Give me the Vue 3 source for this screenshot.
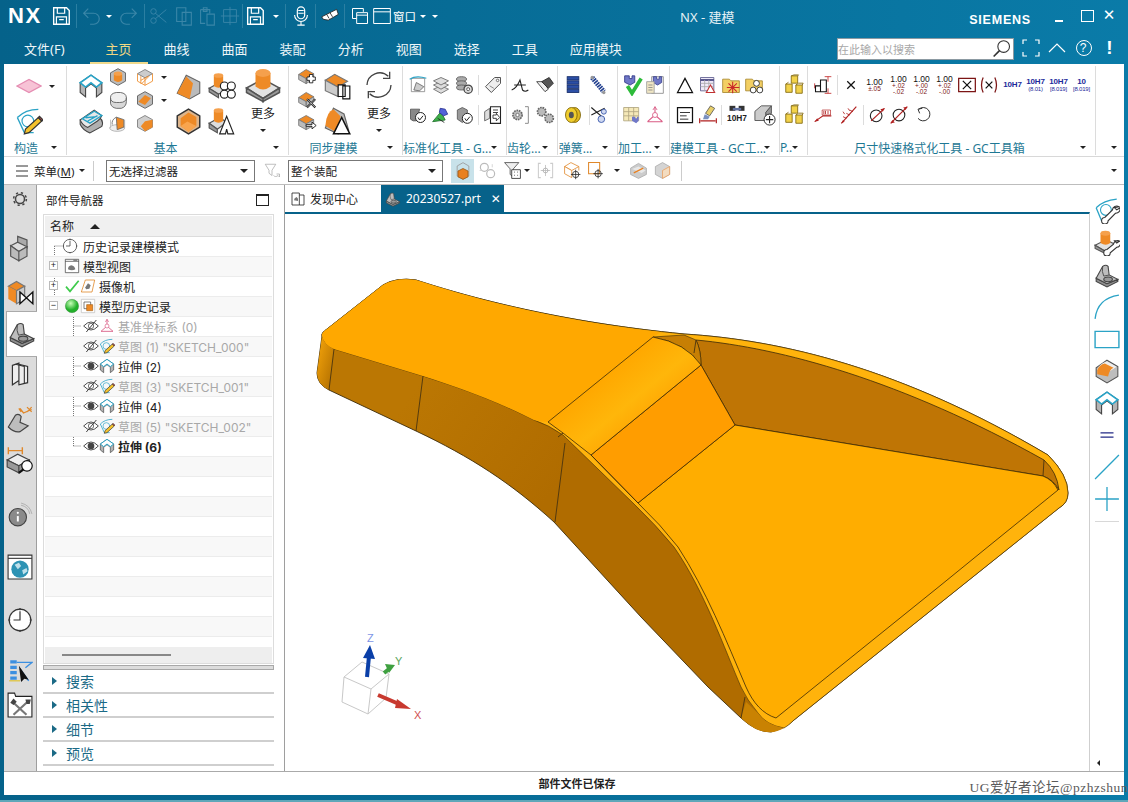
<template>
  <div class="app">
    <!-- shared icon sheet -->
    <svg class="sheet" aria-hidden="true">
      <defs>
        <symbol id="diamond" viewBox="0 0 24 24"><path d="M1 12 12 6l11 6-11 6z" fill="#f7c3d6" stroke="#e58db2" stroke-width="1.2"/></symbol>
        <symbol id="sketch" viewBox="0 0 24 24"><path d="M2 9Q9 2 20 2M2 9l6 13h8" fill="none" stroke="#2ba3c6" stroke-width="1.2"/><circle cx="11" cy="12" r="5" fill="none" stroke="#2ba3c6"/><path d="M20 9l3 3-11 10-4 1 1-4z" fill="#f4c22c" stroke="#333"/><path d="M20 9l3 3 1-1-3-3z" fill="#d8504a" stroke="#333"/></symbol>
        <symbol id="sketchw" viewBox="0 0 24 24"><path d="M2 9Q9 2 21 1M2 9l5 12h6" fill="none" stroke="#2ba3c6" stroke-width="1.2"/><circle cx="11" cy="11" r="5" fill="none" stroke="#2ba3c6"/><path d="M23 8a4 4 0 0 0-6 3l-7 7a3 3 0 1 0 3 3l7-7a4 4 0 0 0 4-5l-3 2-2-2z" fill="#fff" stroke="#333"/></symbol>
        <symbol id="extrude" viewBox="0 0 24 24"><path d="M2 9l10-7 10 7v9l-5 4v-8l-5-4-5 4v8l-5-4z" fill="#b4b4b4" stroke="#444"/><path d="M2 9l10-7 10 7-5 4-5-4-5 4z" fill="#fff" stroke="#27a3c7" stroke-width="1.5"/></symbol>
        <symbol id="revolve" viewBox="0 0 24 24"><path d="M2 11v4q2 5 9 8l11-6q2-5-2-8z" fill="#b0b0b0" stroke="#444"/><path d="M2 11L15 2l7 5q-1 3-4 5l-9 6q-5-2-7-7z" fill="#e8e8e8" stroke="#444"/><path d="M4 10L15 3l7 4-11 7zM7 9l10-1M9 12l9-5" fill="none" stroke="#27a3c7" stroke-width="1.200"/></symbol>
        <symbol id="hole" viewBox="0 0 24 24"><path d="M12 2l9 5v10l-9 5-9-5V7z" fill="#bbb" stroke="#555"/><path d="M7 8v8q5 4 10 0V8z" fill="#ee8a26"/><ellipse cx="12" cy="8" rx="5" ry="2.5" fill="#f5a04c"/></symbol>
        <symbol id="wire" viewBox="0 0 24 24"><path d="M12 3l9 5-9 5-9-5z" fill="#ccc" stroke="#777"/><path d="M3 8v9l9 5 9-5V8M12 13v9M7 11v9M16 11l-9 5M8 20l9-9" fill="none" stroke="#ee8a26"/></symbol>
        <symbol id="pill" viewBox="0 0 24 24"><path d="M3 9v7q1 5 7 6h6q6-2 6-8V9z" fill="#d8d8d8" stroke="#555"/><path d="M3 9q0-5 7-6h5q7 1 7 6 0 6-8 6h-4Q3 15 3 9z" fill="#efefef" stroke="#555"/></symbol>
        <symbol id="cham" viewBox="0 0 24 24"><path d="M12 2l9 5v10l-9 5-9-5V7z" fill="#bbb" stroke="#555"/><path d="M4 14l8-8 7 4-7 8z" fill="#ee8a26"/></symbol>
        <symbol id="ball" viewBox="0 0 24 24"><ellipse cx="11" cy="18" rx="9" ry="4" fill="#eee" stroke="#aaa"/><path d="M3 8v10M20 8v10" stroke="#bbb"/><path d="M10 5l9 3v9l-8 3z" fill="#ee8a26" stroke="#666"/><path d="M10 5Q4 8 5 14" fill="none" stroke="#666"/></symbol>
        <symbol id="smallb" viewBox="0 0 24 24"><path d="M12 3l9 5v9l-9 5-9-5V8z" fill="#cfcfcf" stroke="#777"/><path d="M12 10l9-2v9l-9 5-5-6z" fill="#ee8a26"/></symbol>
        <symbol id="bigb" viewBox="0 0 24 24"><path d="M10 2l12 6v10l-9 5-11-5z" fill="#bbb" stroke="#666"/><path d="M10 3L2 18l11 5 3-14z" fill="#ee8a26"/></symbol>
        <symbol id="blend" viewBox="0 0 24 24"><path d="M12 2l10 6v9l-10 6-10-6V9z" fill="#bdbdbd" stroke="#555"/><path d="M12 3l9 5-6 4-12-1q1-5 9-8z" fill="#eee"/><path d="M3 11q2-5 7-6l8 4q-4 2-5 8l-10-2z" fill="#ee8a26"/></symbol>
        <symbol id="pattern" viewBox="0 0 24 24"><path d="M1 14l9-5 8 5-9 5z" fill="#ddd" stroke="#555"/><path d="M1 14v3l8 5v-3z" fill="#999" stroke="#555"/><path d="M5 3v9q4 3 8 0V3z" fill="#ee8a26"/><ellipse cx="9" cy="3" rx="4" ry="2" fill="#f5a04c"/><g fill="#fff" stroke="#222"><circle cx="14" cy="12" r="3.4"/><circle cx="20" cy="12" r="3.4"/><circle cx="14" cy="19" r="3.4"/><circle cx="20" cy="19" r="3.4"/></g></symbol>
        <symbol id="hexs" viewBox="0 0 24 24"><path d="M12 1l10 6v10l-10 6-10-6V7z" fill="#ddb58c" stroke="#333" stroke-width="1.3"/><path d="M12 4l7 4v8l-7 5-7-5V9z" fill="#ee8a26"/><path d="M5 16l6-4 8 4-7 5z" fill="#f9a54e"/></symbol>
        <symbol id="mirror" viewBox="0 0 24 24"><path d="M1 14l9-5 6 4-8 6z" fill="#ddd" stroke="#555"/><path d="M1 14v4l7 4v-3z" fill="#999" stroke="#555"/><path d="M5 3v9q4 3 8 0V3z" fill="#ee8a26"/><ellipse cx="9" cy="3" rx="4" ry="2" fill="#f5a04c"/><path d="M16 8l-6 15h5l1-4 1 4h5z" fill="#fff" stroke="#222"/></symbol>
        <symbol id="boss" viewBox="0 0 24 24"><path d="M1 14l11-6 11 6-11 7z" fill="#e2e2e2" stroke="#555"/><path d="M1 14v3l11 6v-2zM23 14v3l-11 6v-2z" fill="#999" stroke="#555"/><path d="M7 4v9q5 4 10 0V4z" fill="#ee8a26"/><ellipse cx="12" cy="4" rx="5" ry="2.6" fill="#f5a04c"/></symbol>
        <symbol id="sycross" viewBox="0 0 24 24"><path d="M2 9l9-6 9 5-9 6z" fill="#ee8a26" stroke="#777"/><path d="M2 9v6l9 5v-6zM20 8v6l-9 6v-6z" fill="#bbb" stroke="#777"/><path d="M15 9h4v3h3v4h-3v3h-4v-3h-3v-4h3z" fill="#fff" stroke="#111"/></symbol>
        <symbol id="syx" viewBox="0 0 24 24"><path d="M2 9l9-6 9 5-9 6z" fill="#ee8a26" stroke="#777"/><path d="M2 9v6l9 5v-6zM20 8v6l-9 6v-6z" fill="#bbb" stroke="#777"/><path d="M12 11l10 10M22 11L12 21" stroke="#111" stroke-width="2.4"/><path d="M12 11l10 10M22 11L12 21" stroke="#fff" stroke-width=".8"/></symbol>
        <symbol id="syarr" viewBox="0 0 24 24"><path d="M2 8l9-5 9 5-9 5z" fill="#ee8a26" stroke="#777"/><path d="M2 8v7l9 5v-7zM20 8v7l-9 5v-7z" fill="#bbb" stroke="#777"/><path d="M11 14h7v-3l5 4-5 4v-3h-7zM11 16" fill="#fff" stroke="#111"/></symbol>
        <symbol id="sheets" viewBox="0 0 24 24"><path d="M2 7l8-5 11 6-8 5z" fill="#ee8a26" stroke="#777"/><path d="M2 7v9l11 5v-8z" fill="#ccc" stroke="#777"/><path d="M13 11h6v10h-6zM17 12h6v11h-6z" fill="#fff" stroke="#111"/></symbol>
        <symbol id="wedge" viewBox="0 0 24 24"><path d="M9 1l9 5 4 14-9 3L2 18z" fill="#bbb" stroke="#666"/><path d="M9 2Q3 4 2 16l10 6 3-14z" fill="#ee8a26"/><path d="M16 9L9 23h14z" fill="#fff" stroke="#111" stroke-width="1.3"/></symbol>
        <symbol id="refresh" viewBox="0 0 24 24"><path d="M3 12A9.5 9.5 0 0 1 19 5.500M21 12A9.500 9.500 0 0 1 5 18.500" fill="none" stroke="#444"/><path d="M15 7h5V2M9 17H4v5" fill="none" stroke="#444"/></symbol>
        <symbol id="frame" viewBox="0 0 24 24"><path d="M4 4h16v16H4z" fill="#fff" stroke="#888"/><path d="M7 18l3-9 9 5-5 5z" fill="#ccc" stroke="#666"/><path d="M2 5Q10 0 22 4" fill="none" stroke="#2ba3c6" stroke-width="1.3"/></symbol>
        <symbol id="layers" viewBox="0 0 24 24"><g fill="#ddd" stroke="#666"><path d="M12 13l9 4-9 5-9-5z"/><path d="M12 8l9 4-9 5-9-5z"/><path d="M12 3l9 4-9 5-9-5z"/></g></symbol>
        <symbol id="gearstk" viewBox="0 0 24 24"><g fill="#aaa" stroke="#555"><ellipse cx="9" cy="5" rx="6" ry="3"/><ellipse cx="9" cy="10" rx="6" ry="3"/><ellipse cx="9" cy="15" rx="6" ry="3"/></g><circle cx="17" cy="17" r="5" fill="#ddd" stroke="#444" stroke-width="1.5"/><circle cx="17" cy="17" r="1.800" fill="#fff" stroke="#444"/></symbol>
        <symbol id="tag" viewBox="0 0 24 24"><path d="M14 3h7v7L10 21l-7-7z" fill="#eee" stroke="#555" stroke-width="1.2"/><circle cx="17.500" cy="6.500" r="1.500" fill="#fff" stroke="#555"/><path d="M8 13l5 3" stroke="#777"/></symbol>
        <symbol id="cylchk" viewBox="0 0 24 24"><path d="M3 5v12q3 3 7 2l4-14z" fill="#888" stroke="#555"/><circle cx="15" cy="15" r="6" fill="#fff" stroke="#222" stroke-width="1.2"/><path d="M12 15l2 3 4-5" fill="none" stroke="#222" stroke-width="1.2"/></symbol>
        <symbol id="greenb" viewBox="0 0 24 24"><path d="M2 20L12 8l5 10z" fill="#3fb24a" stroke="#1e6d2a"/><path d="M11 4l6 1 3 6-5 2-5-4z" fill="#5263d8" stroke="#2a3190"/><path d="M8 16l8 5" stroke="#222"/></symbol>
        <symbol id="boxchk" viewBox="0 0 24 24"><path d="M4 6l6-3 6 3v11l-6 4-6-4z" fill="#999" stroke="#555"/><circle cx="16" cy="16" r="6" fill="#fff" stroke="#222" stroke-width="1.2"/><path d="M13 16l2 3 4-5" fill="none" stroke="#222" stroke-width="1.2"/></symbol>
        <symbol id="docarr" viewBox="0 0 24 24"><path d="M2 8l6-4v12l-6 3z" fill="#ddd" stroke="#555"/><path d="M9 2h12v20H9z" fill="#fff" stroke="#222" stroke-width="1.3"/><path d="M12 6h6M12 9h6" stroke="#222"/><path d="M12 12h4v-2l4 5-4 4v-3h-4z" fill="#fff" stroke="#222"/></symbol>
        <symbol id="aline" viewBox="0 0 24 24"><path d="M2 18Q8 16 12 6l3 12q3 3 7 0M5 12h14" fill="none" stroke="#222" stroke-width="1.3"/></symbol>
        <symbol id="penb" viewBox="0 0 24 24"><path d="M2 8l10 12 4-3-6-9z" fill="#eee" stroke="#333"/><path d="M8 8l9-5 5 7-6 6z" fill="#555" stroke="#222"/></symbol>
        <symbol id="gearb" viewBox="0 0 24 24"><circle cx="9" cy="12" r="5.500" fill="#bbb" stroke="#666" stroke-width="2" stroke-dasharray="2 1"/><circle cx="9" cy="12" r="2" fill="#fff" stroke="#666"/><path d="M18 2h4v20h-4" fill="none" stroke="#777"/></symbol>
        <symbol id="gears" viewBox="0 0 24 24"><circle cx="8" cy="8" r="5" fill="#bbb" stroke="#666" stroke-width="2" stroke-dasharray="2 1"/><circle cx="17" cy="16" r="5" fill="#bbb" stroke="#666" stroke-width="2" stroke-dasharray="2 1"/></symbol>
        <symbol id="stackb" viewBox="0 0 24 24"><g fill="#2c4fa6" stroke="#132a66"><rect x="5" y="2" width="14" height="4"/><rect x="5" y="7" width="14" height="4"/><rect x="5" y="12" width="14" height="4"/><rect x="5" y="17" width="14" height="4"/></g></symbol>
        <symbol id="spring" viewBox="0 0 24 24"><path d="M5 3l14 17" stroke="#23408f" stroke-width="6" stroke-dasharray="2 1"/><circle cx="5" cy="3" r="2" fill="#999"/><circle cx="19" cy="21" r="2" fill="#999"/></symbol>
        <symbol id="coil" viewBox="0 0 24 24"><ellipse cx="14" cy="12" rx="7" ry="9" fill="#e0b820" stroke="#7a6000"/><ellipse cx="10" cy="12" rx="7" ry="9" fill="#f0cd2e" stroke="#7a6000"/><ellipse cx="10" cy="12" rx="3" ry="4" fill="#555"/></symbol>
        <symbol id="sciss" viewBox="0 0 24 24"><path d="M4 3l16 14M4 12L20 4" stroke="#222" stroke-width="1.4"/><circle cx="16" cy="17" r="4" fill="#cfd8f0" stroke="#3050a8"/><circle cx="19" cy="8" r="3" fill="#cfd8f0" stroke="#3050a8"/></symbol>
        <symbol id="vcheck" viewBox="0 0 24 24"><path d="M4 2h5v3h3V2h3v7l-5 3-6-3z" fill="#7078c8" stroke="#38408c"/><path d="M7 13l5 8L22 5" fill="none" stroke="#2dbb3a" stroke-width="4"/></symbol>
        <symbol id="vdoc" viewBox="0 0 24 24"><path d="M8 2h14v20H8z" fill="#fff" stroke="#888"/><path d="M10 2h4v3h3V2h3v7l-5 3-5-3z" fill="#7078c8" stroke="#38408c"/><path d="M2 8h9v14H2z" fill="#f0e6c4" stroke="#999"/><path d="M4 12h5M4 15h5M4 18h5" stroke="#888"/></symbol>
        <symbol id="table" viewBox="0 0 24 24"><path d="M2 3h18v16H2z" fill="#f5e9b8" stroke="#b0a580"/><path d="M2 8h18M2 13h18M8 3v16M14 3v16" stroke="#b0a580"/><path d="M12 14h4v2h2v-2h2v5l-3 3-5-3z" fill="#7078c8"/></symbol>
        <symbol id="triad" viewBox="0 0 24 24"><path d="M12 2v10L3 20M12 12l9 8M3 20h18" fill="none" stroke="#d95b84" stroke-width="1.300"/><circle cx="12" cy="12" r="3" fill="#fff" stroke="#d95b84"/><path d="M9.500 6L12 2l2.500 4" fill="none" stroke="#d95b84"/></symbol>
        <symbol id="tri" viewBox="0 0 24 24"><path d="M12 4L3 21h18z" fill="#fff" stroke="#111" stroke-width="1.500"/></symbol>
        <symbol id="rtable" viewBox="0 0 24 24"><path d="M3 3h16v16H3z" fill="#efe9f8" stroke="#5a5a8c"/><path d="M3 6h16" stroke="#3c3c78" stroke-width="2"/><path d="M3 10h16M3 14h16M8 6v13M13 6v13" stroke="#aaa"/><path d="M15 12l-5 9h10z" fill="#fff" stroke="#c03030" stroke-width="1.300"/></symbol>
        <symbol id="fstar" viewBox="0 0 24 24"><path d="M2 5h8l2 2h10v14H2z" fill="#f3cf63" stroke="#a6852c"/><path d="M14 8v14M7 15h15M9 10l10 10M19 10L9 20" stroke="#c82828" stroke-width="1.300"/></symbol>
        <symbol id="fring" viewBox="0 0 24 24"><path d="M2 5h8l2 2h10v12H2z" fill="#f3cf63" stroke="#a6852c"/><g fill="#fff" stroke="#222"><circle cx="15" cy="10" r="3.500"/><circle cx="11" cy="18" r="3.500"/><circle cx="19" cy="18" r="3.500"/></g></symbol>
        <symbol id="tbox" viewBox="0 0 24 24"><path d="M3 3h18v18H3z" fill="#fff" stroke="#111" stroke-width="1.500"/><path d="M6 9h12M6 13h8M6 17h10" stroke="#111"/></symbol>
        <symbol id="paint" viewBox="0 0 24 24"><path d="M15 1l5 3-6 9-5-3z" fill="#e8cf6a" stroke="#555"/><path d="M2 16v6M22 16v6M3 19h18" stroke="#b02020" stroke-width="1.400"/><path d="M8 11l6 3-2 3H6z" fill="#7a90c0"/></symbol>
        <symbol id="binoc" viewBox="0 0 24 24"><rect x="3" y="1" width="7" height="6" fill="#333"/><rect x="14" y="1" width="7" height="6" fill="#333"/><path d="M7 5h10" stroke="#6070a0" stroke-width="3"/><text x="12" y="19" text-anchor="middle" font-family="Liberation Sans" font-size="10" font-weight="700" fill="#222">10H7</text></symbol>
        <symbol id="boxplus" viewBox="0 0 24 24"><path d="M1 8l7-6h11l-6 7v9H1z" fill="#ccc" stroke="#555"/><path d="M13 9l6-7v8l-6 8z" fill="#999" stroke="#555"/><circle cx="17" cy="17" r="6" fill="#fff" stroke="#222"/><path d="M17 13v8M13 17h8" stroke="#222" stroke-width="1.200"/></symbol>
        <symbol id="gold" viewBox="0 0 24 24"><g fill="#f2d24a" stroke="#8a7118"><path d="M9 2h7v8H9z"/><path d="M3 11h7v9H3z"/><path d="M14 12h7v9h-7z"/></g><path d="M9 2l3-1h5l-1 1M3 11l3-2M14 12l3-2h5l-1 2" fill="none" stroke="#8a7118"/></symbol>
        <symbol id="dimh" viewBox="0 0 24 24"><path d="M14 2h8M14 22h8M18 2v6M18 16v6M2 10v6" stroke="#c02828"/><path d="M9 6h7v14H9zM3 13h6v7H3z" fill="#fff" stroke="#111" stroke-width="1.300"/></symbol>
        <symbol id="xmark" viewBox="0 0 24 24"><path d="M7 7l10 10M17 7L7 17" stroke="#111" stroke-width="1.700"/></symbol>
        <symbol id="xbox" viewBox="0 0 24 24"><path d="M2 4h20v16H2z" fill="#fff" stroke="#7c1515" stroke-width="1.500"/><path d="M7 7l10 10M17 7L7 17" stroke="#111" stroke-width="1.500"/></symbol>
        <symbol id="xparen" viewBox="0 0 24 24"><path d="M5 3Q1 12 5 21M19 3q4 9 0 18" fill="none" stroke="#7c1515" stroke-width="1.500"/><path d="M8 8l8 8M16 8l-8 8" stroke="#111" stroke-width="1.500"/></symbol>
        <symbol id="rdim" viewBox="0 0 24 24"><path d="M2 20L12 13h10" fill="none" stroke="#b02020" stroke-width="1.300"/><path d="M2 20l5-1-2-3z" fill="#b02020"/><path d="M11 6h10v6H11z" fill="#fff" stroke="#b02020" stroke-width=".8"/><path d="M13 7v4M15 7v4M18 7v4" stroke="#b02020"/></symbol>
        <symbol id="slant" viewBox="0 0 24 24"><path d="M4 22L22 2" stroke="#b02020" stroke-width="1.400"/><path d="M6 14l4 2M10 10l4 2M14 6l4 2M6 8l2 3M12 4l2 3" stroke="#b02020"/><path d="M4 22l4-2-2-2z" fill="#b02020"/></symbol>
        <symbol id="cdim" viewBox="0 0 24 24"><circle cx="11" cy="13" r="7" fill="#fff" stroke="#222" stroke-width="1.300"/><path d="M5 19L21 4" stroke="#b02020" stroke-width="1.500"/><path d="M21 4l-5 1 3 3z" fill="#b02020"/></symbol>
        <symbol id="cdim2" viewBox="0 0 24 24"><circle cx="12" cy="12" r="7" fill="#fff" stroke="#222" stroke-width="1.300"/><path d="M2 22L22 2" stroke="#b02020" stroke-width="1.500"/><path d="M2 22l5-1-3-3zM22 2l-5 1 3 3z" fill="#b02020"/></symbol>
        <symbol id="undo2" viewBox="0 0 24 24"><path d="M11 4l-5 1 2 5" fill="none" stroke="#333" stroke-width="1.200"/><path d="M7 5a8 8 0 1 1-1 11" fill="none" stroke="#333" stroke-width="1.200"/></symbol>
        <symbol id="floppy" viewBox="0 0 24 24"><path d="M4 3h14l3 3v15H4z" fill="none" stroke="currentColor" stroke-width="1.500"/><path d="M8 3v6h8V3M7 21v-8h11v8M10 16h5" fill="none" stroke="currentColor" stroke-width="1.300"/></symbol>
        <symbol id="undo" viewBox="0 0 24 24"><path d="M5 9h10a6 6 0 0 1 0 12h-4M9 4L4 9l5 5" fill="none" stroke="currentColor" stroke-width="1.300"/></symbol>
        <symbol id="redo" viewBox="0 0 24 24"><path d="M19 9H9a6 6 0 0 0 0 12h4M15 4l5 5-5 5" fill="none" stroke="currentColor" stroke-width="1.300"/></symbol>
        <symbol id="scis" viewBox="0 0 24 24"><circle cx="6" cy="7" r="3" fill="none" stroke="currentColor"/><circle cx="6" cy="17" r="3" fill="none" stroke="currentColor"/><path d="M8 9l12 10M8 15L20 5" stroke="currentColor"/></symbol>
        <symbol id="copy" viewBox="0 0 24 24"><path d="M4 3h10v15H4zM10 8h10v14H10z" fill="none" stroke="currentColor" stroke-width="1.200"/></symbol>
        <symbol id="paste" viewBox="0 0 24 24"><path d="M5 5h10v4M5 5v15h5M12 10h8v12h-8zM8 3h4v4H8z" fill="none" stroke="currentColor" stroke-width="1.200"/></symbol>
        <symbol id="moveic" viewBox="0 0 24 24"><path d="M5 5h14v14H5zM12 2v20M2 12h20" fill="none" stroke="currentColor"/></symbol>
        <symbol id="mic" viewBox="0 0 24 24"><rect x="8" y="2" width="8" height="13" rx="4" fill="none" stroke="currentColor" stroke-width="1.300"/><path d="M5 11a7 7 0 0 0 14 0M12 18v4M8 22h8M9 6h6M9 9h6" fill="none" stroke="currentColor" stroke-width="1.200"/></symbol>
        <symbol id="hand" viewBox="0 0 24 24"><path d="M2 13l12-6 6-3 2 6-5 3-7 4-6-1z" fill="#fff" stroke="#222"/><path d="M12 8l3 5M8 10l3 5" stroke="#222"/></symbol>
        <symbol id="winstack" viewBox="0 0 24 24"><path d="M3 3h13v4M3 3v12h5M8 8h13v13H8zM8 11h13" fill="none" stroke="#fff" stroke-width="1.200"/></symbol>
        <symbol id="winone" viewBox="0 0 24 24"><path d="M2 3h20v18H2zM2 7h20" fill="none" stroke="#fff" stroke-width="1.200"/></symbol>
        <symbol id="mag" viewBox="0 0 24 24"><circle cx="14" cy="9" r="7" fill="#fff" stroke="#333" stroke-width="1.300"/><path d="M9 14l-7 7" stroke="#333" stroke-width="2"/></symbol>
        <symbol id="filter" viewBox="0 0 24 24"><path d="M3 3h14l-5 8v7l-4-3v-4z" fill="#fff" stroke="#aaa"/><path d="M14 18a4 4 0 0 0 6 0l2 2v-4h-4" fill="none" stroke="#aaa"/></symbol>
        <symbol id="solid" viewBox="0 0 24 24"><path d="M12 2l7 4v12l-7 4-7-4V6z" fill="none" stroke="#999"/><path d="M6 12l6-3 6 3v7l-6 3-6-3z" fill="#e9801f" stroke="#9b5a17"/></symbol>
        <symbol id="chain" viewBox="0 0 24 24"><circle cx="8" cy="8" r="5" fill="none" stroke="#bbb" stroke-width="1.500"/><circle cx="16" cy="16" r="5" fill="none" stroke="#bbb" stroke-width="1.500"/><path d="M2 12h4M18 4v4" stroke="#ccc"/></symbol>
        <symbol id="fdoc" viewBox="0 0 24 24"><path d="M2 2h18l-7 8v10l-4-3v-7z" fill="#eee" stroke="#444"/><path d="M11 11h11v11H11z" fill="#fff" stroke="#222"/><path d="M14 14h1M18 14h1M14 18h1M18 18h1" stroke="#222"/></symbol>
        <symbol id="brk" viewBox="0 0 24 24"><path d="M6 3H3v18h3M18 3h3v18h-3" fill="none" stroke="#ccc" stroke-width="1.300"/><path d="M12 5v14M6 12h12" stroke="#bbb"/><circle cx="12" cy="12" r="3" fill="none" stroke="#aaa"/></symbol>
        <symbol id="cubet" viewBox="0 0 24 24"><path d="M2 7l8-5 10 5-9 5z" fill="#fff" stroke="#e0882a"/><path d="M2 7v9l9 5v-9zM20 7v5" fill="#fff" stroke="#e0882a"/><circle cx="16" cy="17" r="4" fill="none" stroke="#222"/><path d="M16 11v12M10 17h12" stroke="#222"/></symbol>
        <symbol id="squaret" viewBox="0 0 24 24"><path d="M2 2h14v14H2z" fill="#fff" stroke="#e0882a" stroke-width="1.300"/><circle cx="14" cy="16" r="4" fill="none" stroke="#222"/><path d="M14 10v12M8 16h12" stroke="#222"/></symbol>
        <symbol id="cube1" viewBox="0 0 24 24"><path d="M12 3l10 6v8l-10 5-10-5V9z" fill="#ccc" stroke="#aaa"/><path d="M4 10l12 5 5-3-9-5z" fill="#e8e8e8"/><path d="M6 15L18 9" stroke="#e9801f" stroke-width="1.500"/></symbol>
        <symbol id="cube2" viewBox="0 0 24 24"><path d="M12 2l9 5v10l-9 5-9-5V7z" fill="#d4d4d4" stroke="#aaa"/><path d="M12 12l9-5v10l-9 5z" fill="#f3dcc0" stroke="#e9a060"/></symbol>
        <symbol id="gear" viewBox="0 0 24 24"><circle cx="12" cy="12" r="6" fill="none" stroke="#444" stroke-width="2" /><circle cx="12" cy="12" r="8.500" fill="none" stroke="#444" stroke-width="2" stroke-dasharray="3 3.700"/></symbol>
        <symbol id="blocks" viewBox="0 0 24 24"><path d="M10 2l8 3v7l-8-3z" fill="#aaa" stroke="#555"/><path d="M4 10l6-3 8 4-7 4z" fill="#ddd" stroke="#555"/><path d="M4 10v9l7 4v-8zM11 15l7-4v8l-7 4z" fill="#bbb" stroke="#555"/></symbol>
        <symbol id="blockx" viewBox="0 0 24 24"><path d="M2 7l7-4 7 4-7 4z" fill="#f08a24" stroke="#777"/><path d="M2 7v11l7 4V11z" fill="#f08a24"/><path d="M9 11l7-4v11l-7 4z" fill="#ccc" stroke="#777"/><path d="M12 12l11 10V12L12 22z" fill="#fff" stroke="#111" stroke-width="1.200"/></symbol>
        <symbol id="part" viewBox="0 0 24 24"><path d="M2 15v3l10 5 10-5v-2L12 20z" fill="#8e8e8e" stroke="#444"/><path d="M2 15L8 4q3-2 5 0l1 8 8 4-10 4z" fill="#bdbdbd" stroke="#444"/><path d="M8 4q-1 5 1 9l5-1" fill="none" stroke="#444" stroke-width=".8"/><ellipse cx="13" cy="16" rx="4" ry="2.200" fill="#999" stroke="#444"/></symbol>
        <symbol id="books" viewBox="0 0 24 24"><path d="M5 4l6-2v16l-6 4zM11 3l8 2v15l-8 2z" fill="#eee" stroke="#333" stroke-width="1.100"/><path d="M8 3l8 2v16" fill="none" stroke="#333"/></symbol>
        <symbol id="partdim" viewBox="0 0 24 24"><path d="M2 18L8 8q3-2 5 1l-1 5 7 3-7 5q-5 1-10-4z" fill="#bdbdbd" stroke="#444"/><path d="M12 2l3 4 7-3M18 1l4 4M22 1l-4 4M11 2l2 3" fill="none" stroke="#e0882a" stroke-width="1.100"/></symbol>
        <symbol id="blockmag" viewBox="0 0 24 24"><path d="M1 12l9-5 10 5-9 5z" fill="#eee" stroke="#444"/><path d="M1 12v6l10 5v-6zM20 12v4l-9 7v-6z" fill="#999" stroke="#444"/><path d="M2 4h12M2 1v6M14 1v6" stroke="#e0882a" stroke-width="1.200"/><circle cx="18" cy="17" r="4.500" fill="#fff" stroke="#111"/><path d="M15 20l-4 3" stroke="#111" stroke-width="1.800"/></symbol>
        <symbol id="info" viewBox="0 0 24 24"><circle cx="10" cy="14" r="8" fill="#8a8a8a" stroke="#444"/><path d="M10 13v5" stroke="#fff" stroke-width="1.800"/><circle cx="10" cy="10" r="1" fill="#fff"/><path d="M13 3a10 10 0 0 1 8 8M13 1a13 13 0 0 1 10 10" fill="none" stroke="#aaa" stroke-width=".8"/></symbol>
        <symbol id="globe" viewBox="0 0 24 24"><path d="M1 1h22v22H1z" fill="#fff" stroke="#333"/><path d="M1 4h22" stroke="#333"/><circle cx="12" cy="14" r="8" fill="#2e93b4"/><path d="M7 10l4-2 2 3-3 3zM14 15l4-2 1 3-4 3z" fill="#bfe0ea"/></symbol>
        <symbol id="clock" viewBox="0 0 24 24"><circle cx="12" cy="12" r="10" fill="#fff" stroke="#333" stroke-width="1.100"/><path d="M12 4v8H6M12 1v2M12 21v2M1 12h2M21 12h2" fill="none" stroke="#333" stroke-width="1.100"/></symbol>
        <symbol id="wand" viewBox="0 0 24 24"><path d="M3 3h6v3H3zM3 8h6v3H3zM3 13h6v3H3zM3 18h6v3H3z" fill="#3c8fe0"/><path d="M9 5h14l-6 5M12 11l8 11" fill="none" stroke="#3c8fe0" stroke-width="1.300"/><path d="M11 8l9 13-4-1-3 3z" fill="#111"/><path d="M2 22h10" stroke="#e0c020"/></symbol>
        <symbol id="tools" viewBox="0 0 24 24"><path d="M1 4V1h6l1 3h15v19H1z" fill="#fff" stroke="#222"/><path d="M5 9l13 12M19 9L6 21" stroke="#777" stroke-width="2"/><path d="M3 10l3-4 3 3-3 3zM17 7h5l-1 4h-3z" fill="#444"/></symbol>
        <symbol id="arc" viewBox="0 0 24 24"><path d="M1 23Q3 4 23 1" fill="none" stroke="#2ba3c6" stroke-width="1.200"/></symbol>
        <symbol id="rect" viewBox="0 0 24 24"><path d="M1 5h22v15H1z" fill="none" stroke="#2ba3c6" stroke-width="1.300"/></symbol>
        <symbol id="equal" viewBox="0 0 24 24"><path d="M6 10h12M6 14h12" stroke="#232a86" stroke-width="1.200"/></symbol>
        <symbol id="line" viewBox="0 0 24 24"><path d="M1 23L23 1" stroke="#2ba3c6" stroke-width="1.200"/></symbol>
        <symbol id="plus" viewBox="0 0 24 24"><path d="M12 1v22M1 12h22" stroke="#2ba3c6" stroke-width="1.200"/></symbol>
        <symbol id="wrenchboss" viewBox="0 0 24 24"><path d="M1 14l10-5 10 5-10 6z" fill="#e2e2e2" stroke="#555"/><path d="M1 14v3l10 5v-2z" fill="#999" stroke="#555"/><path d="M6 3v9q5 3 9 0V3z" fill="#ee8a26"/><ellipse cx="10.500" cy="3" rx="4.500" ry="2.300" fill="#f5a04c"/><path d="M23 10a4 4 0 0 0-5 3l-6 5a3 3 0 1 0 3 3l6-5a4 4 0 0 0 3-6l-3 2-2-2z" fill="#fff" stroke="#333"/></symbol>
        <symbol id="eye" viewBox="0 0 24 24"><path d="M1 12q11-12 22 0-11 12-22 0z" fill="#fff" stroke="#333" stroke-width="1.300"/><circle cx="12" cy="12" r="5" fill="#444"/></symbol>
        <symbol id="eyeoff" viewBox="0 0 24 24"><path d="M1 12q11-12 22 0-11 12-22 0z" fill="#fff" stroke="#333" stroke-width="1.300"/><circle cx="12" cy="12" r="4" fill="none" stroke="#333"/><path d="M5 21L20 3" stroke="#333" stroke-width="1.400"/></symbol>
        <symbol id="viewic" viewBox="0 0 24 24"><path d="M2 2h20v20H2z" fill="#fff" stroke="#333"/><path d="M2 5h20M14 3.500h6" stroke="#333"/><path d="M6 17q0-5 5-6 5 1 6 6-5 3-11 0z" fill="#777"/></symbol>
        <symbol id="check" viewBox="0 0 24 24"><path d="M3 13l6 7L22 4" fill="none" stroke="#3ecb4b" stroke-width="2.500"/></symbol>
        <symbol id="cam" viewBox="0 0 24 24"><path d="M8 3h14l-4 18H2z" fill="#fff" stroke="#e0882a" stroke-width="1.200"/><path d="M8 14l4-6 4 3-2 5-5 1z" fill="#777"/></symbol>
        <symbol id="histic" viewBox="0 0 24 24"><path d="M2 2h20v20H2z" fill="#fff" stroke="#bbb"/><path d="M6 6h10v10H6z" fill="none" stroke="#444"/><path d="M10 10h9v9h-9z" fill="#ee8a26" stroke="#a55f17"/></symbol>
        <symbol id="gball" viewBox="0 0 24 24"><defs><radialGradient id="gb" cx=".4" cy=".3"><stop offset="0" stop-color="#c7ffb8"/><stop offset="1" stop-color="#22b02a"/></radialGradient></defs><circle cx="12" cy="12" r="10" fill="url(#gb)" stroke="#2a7d30" stroke-width=".6"/></symbol>
        <symbol id="discover" viewBox="0 0 24 24"><path d="M3 3h11v18H3zM14 6h7v15h-7" fill="#fff" stroke="#222" stroke-width="1.200"/><path d="M6 14q0-4 4-5 3 2 2 6z" fill="#777"/></symbol>
      </defs>
    </svg>

    <!-- title row -->
    <div class="title-row">
      <div class="nx">NX</div>
      <template v-for="(q, n) in qat" :key="n">
        <span v-if="q.sep" class="qsep"></span>
        <span v-else-if="q.caret" class="qcell" :style="{ width: q.w + 'px' }"><i class="caret white"></i></span>
        <span v-else-if="q.text" class="qtext">{{ q.text }}</span>
        <span v-else class="qcell" :class="{ dim: q.dim }" :style="{ width: q.w + 'px' }">
          <svg :width="q.s || 22" :height="q.s || 22"><use :href="'#' + q.i" /></svg>
        </span>
      </template>
      <div class="app-title">NX - 建模</div>
      <div class="siemens">SIEMENS</div>
      <div class="win-btns">
        <span class="wb min"></span>
        <span class="wb max"></span>
        <span class="wb close">✕</span>
      </div>
    </div>

    <!-- menu row -->
    <div class="menu-row">
      <span class="menu file">文件(F)</span>
      <span
        v-for="m in menus"
        :key="m"
        class="menu"
        :class="{ active: m === '主页' }"
      >{{ m }}</span>
      <div class="search">
        <span>在此输入以搜索</span>
        <svg width="20" height="20"><use href="#mag" /></svg>
      </div>
      <div class="menu-tools">
        <svg width="26" height="22" viewBox="0 0 26 22"><path d="M5 7V3h4M17 3h4v4M21 15v4h-4M9 19H5v-4" fill="none" stroke="#fff" stroke-width="1.200" /></svg>
        <svg width="26" height="22" viewBox="0 0 26 22"><path d="M5 15l8-8 8 8" fill="none" stroke="#fff" stroke-width="1.200" /></svg>
        <span class="help">?</span>
        <span class="bang">!</span>
      </div>
    </div>

    <div class="body">
      <!-- ribbon -->
      <div class="ribbon">
        <div v-for="g in groups" :key="g.label" class="group" :style="{ width: g.w + 'px' }">
          <div class="g-body" :class="g.mode" :style="{ paddingLeft: g.pl + 'px' }">
            <div
              v-for="(lane, ln) in g.lanes"
              :key="ln"
              class="lane"
              :class="lane.cls"
              :style="lane.w ? { width: lane.w + 'px' } : null"
            >
              <div
                v-for="(c, k) in lane.items"
                :key="k"
                class="cell"
                :class="c.cls"
                :style="c.w ? { width: c.w + 'px' } : null"
              >
                <svg v-if="c.i" :width="c.s" :height="c.s"><use :href="'#' + c.i" /></svg>
                <span v-else-if="c.sep" class="vsep"></span>
                <i v-else-if="c.caret" class="caret"></i>
                <span v-else-if="c.more" class="more">更多</span>
                <span v-else-if="c.tol" class="tol"><b>{{ c.tol[0] }}</b><em>{{ c.tol[1] }}</em></span>
                <span v-else-if="c.fit" class="fit">{{ c.fit[0] }}<small v-if="c.fit[1]">{{ c.fit[1] }}</small></span>
              </div>
            </div>
          </div>
          <div class="g-label">
            <span class="g-name" :class="{ first: g.label === '构造' }">{{ g.label }}</span>
            <span class="g-caret"><i class="caret"></i></span>
          </div>
        </div>
        <span class="ribbon-end"><i class="caret"></i></span>
      </div>

      <!-- command bar -->
      <div class="cmdbar">
        <svg class="hamb" width="16" height="16" viewBox="0 0 16 16"><path d="M2 3h12M2 8h12M2 13h12" stroke="#333" /></svg>
        <span class="cmd-menu">菜单(<u>M</u>)</span>
        <span class="cbox w14"><i class="caret"></i></span>
        <span class="csep"></span>
        <div class="sel first"><span>无选择过滤器</span><i class="caret big"></i></div>
        <span class="cbox w33"><svg width="18" height="18"><use href="#filter" /></svg></span>
        <div class="sel second"><span>整个装配</span><i class="caret big"></i></div>
        <span class="cbox hl"><svg width="20" height="20"><use href="#solid" /></svg></span>
        <span v-for="(c, n) in cmdIcons" :key="n" class="cbox" :style="{ width: c.w + 'px' }">
          <svg v-if="c.i" width="19" height="19"><use :href="'#' + c.i" /></svg>
          <i v-else class="caret"></i>
        </span>
        <span class="csep last"></span>
        <span class="cbox end"><i class="caret"></i></span>
      </div>

      <div class="main">
        <!-- resource bar -->
        <div class="rail">
          <div
            v-for="r in railItems"
            :key="r.i"
            class="rail-item"
            :class="{ on: r.on }"
            :style="{ marginTop: r.mt + 'px' }"
          >
            <svg :width="r.s" :height="r.s"><use :href="'#' + r.i" /></svg>
          </div>
        </div>

        <!-- part navigator -->
        <div class="nav">
          <div class="nav-head">
            <span>部件导航器</span>
            <span class="maxbox"></span>
          </div>
          <div class="tree">
            <div class="tree-head"><span>名称</span><i class="caret up"></i></div>
            <div class="rows">
              <!-- dotted connectors lie over the rows -->
              <svg class="conn" width="60" height="220" viewBox="0 0 60 220">
                <path d="M9.500 9V69M9.500 9H17M28.500 70V210M28.500 89H36M28.500 109H36M28.500 129H36M28.500 149H36M28.500 169H36M28.500 189H36M28.500 209H36" fill="none" stroke="#777" stroke-dasharray="1 1" />
              </svg>
              <div v-for="(r, n) in treeRows" :key="n" class="row" :class="{ alt: n % 2 === 1 }">
                <template v-if="r">
                  <span v-if="r.box" class="xbox-t">{{ r.box }}</span>
                  <div class="row-in" :style="{ paddingLeft: r.pl + 'px' }">
                    <svg v-for="ic in r.icons" :key="ic" width="16" height="16"><use :href="'#' + ic" /></svg>
                    <span class="row-text" :class="{ dim: r.dim, bold: r.bold, wide: r.wide }">{{ r.text }}</span>
                  </div>
                </template>
              </div>
            </div>
            <div class="hscroll"><span></span></div>
          </div>
          <div class="splitter"></div>
          <div v-for="s in sections" :key="s" class="sect">
            <i class="tri-r"></i><span>{{ s }}</span>
          </div>
        </div>

        <!-- graphics -->
        <div class="center">
          <div class="tabs">
            <div class="tab">
              <svg width="16" height="16"><use href="#discover" /></svg>
              <span>发现中心</span>
            </div>
            <div class="tab current">
              <svg width="16" height="16"><use href="#part" /></svg>
              <span>20230527.prt</span>
              <b>✕</b>
            </div>
          </div>
          <div class="view">
            <svg class="model" viewBox="284 213 805 558" width="805" height="558">
              <defs>
                <linearGradient id="fillet" gradientUnits="userSpaceOnUse" x1="600" y1="380" x2="645" y2="435">
                  <stop offset="0" stop-color="#ffa800" />
                  <stop offset=".5" stop-color="#ffb60a" />
                  <stop offset="1" stop-color="#ffa000" />
                </linearGradient>
                <linearGradient id="endcap" gradientUnits="userSpaceOnUse" x1="316" y1="360" x2="333" y2="365">
                  <stop offset="0" stop-color="#e89a08" />
                  <stop offset="1" stop-color="#bd7802" />
                </linearGradient>
                <linearGradient id="sidewall" gradientUnits="userSpaceOnUse" x1="420" y1="380" x2="560" y2="480">
                  <stop offset="0" stop-color="#bb7703" />
                  <stop offset="1" stop-color="#b06c00" />
                </linearGradient>
              </defs>
              <!-- outer body -->
              <path d="M321 336Q320 333 326 329L382 285Q395 277 415 280C470 298 560 322 683 334C780 340 900 368 1047 455Q1067 475 1067 493Q1067 503 1058 508L793 720Q785 728 770 732Q755 732 740 718L707 687L640 617L553 522C510 483 470 457 415 431L328 390Q316 384 316 373Z" fill="url(#sidewall)" stroke="#3b2a08" stroke-width=".9" />
              <!-- rim -->
              <path d="M321 336Q320 333 326 329L382 285Q395 277 415 280C470 298 560 322 683 334C780 340 900 368 1047 455Q1067 475 1067 493Q1067 503 1058 508L793 720Q787 726 783 728Q765 725 757 713Q746 700 740 687C724 650 703 590 673 547Q655 525 632 503L562 435Q548 425 533 420C490 398 450 385 422 376L333 349Q323 345 321 336Z" fill="#ffb30c" stroke="#3b2a08" stroke-width=".6" />
              <!-- handle top -->
              <path d="M321 336Q320 333 326 329L382 285Q395 277 415 280C470 298 560 322 660 332L652 337L547 422Q540 422 533 420C490 398 450 385 422 376L333 349Q323 345 321 336Z" fill="#ffa800" />
              <path d="M321 336Q323 345 333 349L328 390Q316 384 316 373Z" fill="url(#endcap)" />
              <path d="M745 702L757 713Q765 725 783 728Q775 733 766 732Q755 732 740 718Z" fill="#c98202" />
              <!-- pocket -->
              <path d="M695 340C780 348 900 380 1043 460Q1056 472 1058 490Q1053 480 1042 476L734 425L700 365Q700 350 695 340Z" fill="#bf7505" stroke="#3b2a08" stroke-width=".8" />
              <path d="M683 335L695 340Q700 350 700 365Q685 343 652 337Z" fill="#c77f04" stroke="#3b2a08" stroke-width=".6" />
              <path d="M734 425L1042 476Q1052 480 1057 490L983 550L940 585L775 718C762 714 752 703 745 687C725 640 705 590 677 547Q660 525 637 503Z" fill="#ffad00" stroke="#3b2a08" stroke-width=".8" />
              <path d="M700 365L734 425L637 503L590 455Z" fill="#ff9d00" stroke="#3b2a08" stroke-width=".8" />
              <path d="M652 337L547 422L562 433L590 455L700 365Q685 343 652 337Z" fill="url(#fillet)" stroke="#3b2a08" stroke-width=".8" />
              <path d="M590 455L637 503" fill="none" stroke="#3b2a08" stroke-width=".7" />
              <!-- silhouette ticks -->
              <path d="M333 349L328 390M422 376L415 431M564 443L554 522M744 697L740 718M695 340L693 353M1043 460L1042 476M557 437L562 433" stroke="#4a3410" stroke-width=".9" />
              <!-- triad -->
              <path d="M361 662L343 677L370 689L388 674ZM343 677L341 702L367 714L370 689M367 714L385 698L388 674" fill="#fff" stroke="#c8c8c8" />
              <path d="M366 677L368 656" stroke="#0a3fa8" stroke-width="4" />
              <path d="M362 658L369 645L374 659Z" fill="#0a3fa8" />
              <path d="M383 673L388 669" stroke="#3fa040" stroke-width="4" />
              <path d="M384 664L394 665L388 673Z" fill="#3fa040" />
              <path d="M377 695L398 704" stroke="#c8392f" stroke-width="4" />
              <path d="M396 699L410 709L394 708Z" fill="#c8392f" />
              <text x="366" y="642" class="ax z">Z</text>
              <text x="394" y="665" class="ax y">Y</text>
              <text x="413" y="719" class="ax x">X</text>
            </svg>
          </div>
        </div>

        <!-- right toolbar -->
        <div class="rbar">
          <div v-for="r in rightIcons" :key="r" class="ritem">
            <svg width="26" height="26"><use :href="'#' + r" /></svg>
          </div>
          <span class="rsep"></span>
          <span class="rarrow"></span>
        </div>
      </div>

      <div class="status">部件文件已保存</div>
    </div>
    <div class="watermark">UG爱好者论坛@pzhzshun</div>
  </div>
</template>

<script setup>
const qat = [
  { i: 'floppy', w: 31 }, { sep: 1 },
  { i: 'undo', w: 28, dim: 1 }, { caret: 1, w: 8 }, { i: 'redo', w: 31, dim: 1 }, { sep: 1 },
  { i: 'scis', w: 27, dim: 1 }, { i: 'copy', w: 23, dim: 1 }, { i: 'paste', w: 23, dim: 1 }, { i: 'moveic', w: 24, dim: 1 }, { sep: 1 },
  { i: 'floppy', w: 24 }, { caret: 1, w: 18 }, { sep: 1 },
  { i: 'mic', w: 29 }, { sep: 1 },
  { i: 'hand', w: 28, s: 20 }, { sep: 1 },
  { i: 'winstack', w: 30, s: 20 }, { i: 'winone', w: 14, s: 20 },
  { text: '窗口' }, { caret: 1, w: 14 }, { caret: 1, w: 10 }
]

const menus = ['主页', '曲线', '曲面', '装配', '分析', '视图', '选择', '工具', '应用模块']

const ic = (i, w, s = 22) => ({ i, w, s })
const sep = (w) => ({ sep: 1, w })
const caret = () => ({ caret: 1, cls: 'c-caret' })
const tol = (a, b, w) => ({ tol: [a, b], w })
const fit = (a, b, w) => ({ fit: [a, b], w })
const col = (w, cls, ...items) => ({ w, cls, items })
const row = (...items) => ({ cls: 'line', items })
const blank = () => ({})

const groups = [
  {
    label: '构造', w: 63, pl: 8, mode: 'cols',
    lanes: [
      col(34, 't2', { i: 'diamond', s: 26 }, { i: 'sketch', s: 28 }),
      col(12, 't2', caret(), blank())
    ]
  },
  {
    label: '基本', w: 222, pl: 11, mode: 'cols',
    lanes: [
      col(26, 't2', { i: 'extrude', s: 26 }, { i: 'revolve', s: 26 }),
      col(28, 't3', { i: 'hole', s: 20 }, { i: 'pill', s: 20 }, { i: 'ball', s: 20 }),
      col(26, 't3', { i: 'wire', s: 20 }, { i: 'cham', s: 20 }, { i: 'smallb', s: 20 }),
      col(12, 't3', caret(), caret(), blank()),
      col(36, 't2', { i: 'bigb', s: 27 }, { i: 'hexs', s: 27 }),
      col(32, 't2', { i: 'pattern', s: 28 }, { i: 'mirror', s: 28 }),
      col(50, 'tm', { i: 'boss', s: 36 }, { more: 1, cls: 'c-more' }, caret())
    ]
  },
  {
    label: '同步建模', w: 114, pl: 6, mode: 'cols',
    lanes: [
      col(24, 't3', { i: 'sycross', s: 20 }, { i: 'syx', s: 20 }, { i: 'syarr', s: 20 }),
      col(36, 't2', { i: 'sheets', s: 28 }, { i: 'wedge', s: 28 }),
      col(48, 'tm', { i: 'refresh', s: 32 }, { more: 1, cls: 'c-more' }, caret())
    ]
  },
  {
    label: '标准化工具 - G...', w: 104, pl: 3, mode: 'rows',
    lanes: [
      row(ic('frame', 23, 20), ic('layers', 23, 20), ic('gearstk', 23, 20), sep(6), ic('tag', 24, 20)),
      row(ic('cylchk', 23, 20), ic('greenb', 23, 20), ic('boxchk', 23, 20), sep(6), ic('docarr', 24, 20))
    ]
  },
  {
    label: '齿轮...', w: 51, pl: 0, mode: 'rows',
    lanes: [
      row(ic('aline', 25, 20), ic('penb', 25, 20)),
      row(ic('gearb', 25, 20), ic('gears', 25, 20))
    ]
  },
  {
    label: '弹簧...', w: 60, pl: 4, mode: 'rows',
    lanes: [
      row(ic('stackb', 22, 20), ic('spring', 28, 20)),
      row(ic('coil', 22, 20), sep(10), ic('sciss', 8, 20))
    ]
  },
  {
    label: '加工...', w: 52, pl: 3, mode: 'rows',
    lanes: [
      row(ic('vcheck', 22, 22), ic('vdoc', 24, 20)),
      row(ic('table', 22, 20), ic('triad', 24, 20))
    ]
  },
  {
    label: '建模工具 - GC工...', w: 110, pl: 3, mode: 'rows',
    lanes: [
      row(ic('tri', 23, 20), ic('rtable', 23, 20), ic('fstar', 23, 20), ic('fring', 23, 20)),
      row(ic('tbox', 23, 20), ic('paint', 23, 20), sep(4), ic('binoc', 28, 20), ic('boxplus', 28, 22))
    ]
  },
  {
    label: 'P..', w: 28, pl: 3, mode: 'rows',
    lanes: [row(ic('gold', 22, 22)), row(ic('gold', 22, 22))]
  },
  {
    label: '尺寸快速格式化工具 - GC工具箱', w: 288, pl: 4, mode: 'rows',
    lanes: [
      row(
        ic('dimh', 22, 20), sep(6), ic('xmark', 22, 18),
        tol('1.00', '±.05', 25), tol('1.00', '+.02 -.02', 23), tol('1.00', '+.00 -.02', 23), tol('1.00', '+.02 -.00', 23),
        ic('xbox', 21, 20), ic('xparen', 24, 20),
        fit('10H7', '', 23), fit('10H7', '(8.01)', 23), fit('10H7', '[8.019]', 23), fit('10', '[8.019]', 23)
      ),
      row(ic('rdim', 22, 20), ic('slant', 28, 20), sep(2), ic('cdim', 26, 20), ic('cdim2', 18, 20), ic('undo2', 30, 20))
    ]
  }
]

const cmdIcons = [
  { i: 'chain', w: 26 }, { i: 'fdoc', w: 24 }, { w: 6 }, { i: 'brk', w: 30 },
  { i: 'cubet', w: 24 }, { i: 'squaret', w: 24 }, { w: 18 }, { i: 'cube1', w: 24 }, { i: 'cube2', w: 24 }
]

// rail icons are placed by their vertical centre
const rail = [
  { i: 'gear', c: 199, s: 18, h: 28 }, { i: 'blocks', c: 248, s: 28, h: 28 }, { i: 'blockx', c: 292, s: 28, h: 28 },
  { i: 'part', c: 334, s: 28, h: 46, on: true }, { i: 'books', c: 374, s: 26, h: 28 }, { i: 'partdim', c: 420, s: 28, h: 28 },
  { i: 'blockmag', c: 460, s: 28, h: 28 }, { i: 'info', c: 515, s: 26, h: 28 }, { i: 'globe', c: 567, s: 26, h: 28 },
  { i: 'clock', c: 620, s: 26, h: 28 }, { i: 'wand', c: 670, s: 26, h: 28 }, { i: 'tools', c: 705, s: 26, h: 28 }
]
let bottom = 185
const railItems = rail.map((r) => {
  const mt = r.c - r.h / 2 - bottom
  bottom = r.c + r.h / 2
  return { ...r, mt }
})

const child = (icons, text, extra = {}) => ({ pl: 38, icons, text, ...extra })
const treeRows = [
  { pl: 17, icons: ['clock'], text: '历史记录建模模式', wide: true },
  { pl: 19, icons: ['viewic'], text: '模型视图', box: '+' },
  { pl: 19, icons: ['check', 'cam'], text: '摄像机', box: '+' },
  { pl: 19, icons: ['gball', 'histic'], text: '模型历史记录', box: '−' },
  child(['eyeoff', 'triad'], '基准坐标系 (0)', { dim: true }),
  child(['eyeoff', 'sketch'], '草图 (1) "SKETCH_000"', { dim: true }),
  child(['eye', 'extrude'], '拉伸 (2)'),
  child(['eyeoff', 'sketch'], '草图 (3) "SKETCH_001"', { dim: true }),
  child(['eye', 'extrude'], '拉伸 (4)'),
  child(['eyeoff', 'sketch'], '草图 (5) "SKETCH_002"', { dim: true }),
  child(['eye', 'extrude'], '拉伸 (6)', { bold: true }),
  ...Array(9).fill(null)
]

const sections = ['搜索', '相关性', '细节', '预览']

const rightIcons = ['sketchw', 'wrenchboss', 'part', 'arc', 'rect', 'blend', 'extrude', 'equal', 'line', 'plus']
</script>

<style scoped>
.app {
  position: relative;
  width: 1128px;
  height: 802px;
  overflow: hidden;
  box-sizing: border-box;
  display: flex;
  flex-direction: column;
  background: linear-gradient(90deg, #05628a, #0a7ba8);
  border-bottom: 2px solid #5fa7b9;
  font-family: "Noto Sans", "Noto Sans CJK SC", sans-serif;
  font-size: 12px;
  color: #222;
}
.sheet {
  position: absolute;
  width: 0;
  height: 0;
}
svg {
  display: block;
  flex-shrink: 0;
}
.caret {
  display: inline-block;
  width: 0;
  height: 0;
  border-left: 3px solid transparent;
  border-right: 3px solid transparent;
  border-top: 3px solid #222;
}
.caret.white {
  border-top-color: #fff;
}
.caret.big {
  border-left-width: 4px;
  border-right-width: 4px;
  border-top-width: 4px;
}
.caret.up {
  border-top: 0;
  border-bottom: 5px solid #222;
  border-left-width: 5px;
  border-right-width: 5px;
  margin-left: 16px;
}

/* title row */
.title-row {
  height: 32px;
  display: flex;
  align-items: center;
  color: #fff;
  flex-shrink: 0;
}
.nx {
  width: 45px;
  box-sizing: border-box;
  padding-left: 8px;
  font: 700 22px "Liberation Sans", sans-serif;
  letter-spacing: 1.500px;
  white-space: nowrap;
}
.qsep {
  width: 1px;
  height: 24px;
  background: #2b7fa2;
}
.qcell {
  display: flex;
  align-items: center;
  justify-content: center;
  color: #fff;
  flex-shrink: 0;
}
.qcell.dim {
  color: #3a86a8;
}
.qtext {
  margin-left: 4px;
  width: 23px;
  font-size: 11.500px;
  white-space: nowrap;
}
.app-title {
  margin-left: 240px;
  font-size: 13px;
  color: #e4f0f5;
  white-space: nowrap;
}
.siemens {
  margin-left: auto;
  margin-top: 8px;
  font: 700 12.500px "Liberation Sans", sans-serif;
  letter-spacing: .8px;
}
.win-btns {
  display: flex;
  align-items: center;
  margin-left: 17px;
  padding-right: 8px;
}
.wb {
  width: 22px;
  height: 20px;
  display: flex;
  justify-content: center;
  position: relative;
}
.wb.min {
  margin-right: 2px;
}
.wb.min::after {
  content: "";
  width: 8px;
  height: 2px;
  background: #fff;
  margin-top: 14px;
}
.wb.max {
  margin-left: 4px;
}
.wb.max::after {
  content: "";
  width: 11px;
  height: 10px;
  border: 1px solid #fff;
  margin-top: 4px;
}
.wb.close {
  font: 15px/18px "DejaVu Sans", sans-serif;
  color: #fff;
}

/* menu row */
.menu-row {
  height: 32px;
  display: flex;
  align-items: stretch;
  color: #eef6f9;
  font-size: 13px;
  flex-shrink: 0;
}
.menu {
  padding: 0 16px;
  line-height: 34px;
  white-space: nowrap;
}
.menu.file {
  padding: 0;
  margin: 0 25px 0 24px;
}
.menu.active {
  color: #f0d783;
  box-shadow: inset 0 -2px 0 #efd98c;
}
.search {
  margin: 6px 0 4px auto;
  width: 177px;
  height: 22px;
  box-sizing: border-box;
  background: #fff;
  border: 1px solid #8c9aa2;
  display: flex;
  align-items: center;
  justify-content: space-between;
  padding-right: 1px;
  color: #a8a8a8;
  font-size: 11px;
}
.menu-tools {
  display: flex;
  align-items: center;
  padding: 0 5px 0 4px;
}
.help {
  width: 26px;
  display: flex;
  justify-content: center;
  font: 12px/14px "Liberation Sans", sans-serif;
  color: #fff;
  position: relative;
}
.help::before {
  content: "";
  position: absolute;
  left: 6px;
  top: -1px;
  width: 14px;
  height: 14px;
  border: 1px solid #fff;
  border-radius: 50%;
}
.bang {
  width: 27px;
  text-align: center;
  font: 700 19px "Liberation Sans", sans-serif;
  color: #fff;
}

.body {
  flex: 1;
  min-height: 0;
  margin: 0 4px 5px;
  background: #fff;
  display: flex;
  flex-direction: column;
}

/* ribbon */
.ribbon {
  height: 93px;
  flex-shrink: 0;
  display: flex;
  border-bottom: 1px solid #d8d8d8;
  box-sizing: border-box;
  padding-top: 2px;
}
.group {
  box-sizing: border-box;
  flex-shrink: 0;
  height: 89px;
  border-right: 1px solid #dcdcdc;
  display: flex;
  flex-direction: column;
}
.g-body {
  height: 74px;
  display: flex;
}
.g-body.rows {
  flex-direction: column;
  padding-top: 8px;
  gap: 8px;
  box-sizing: border-box;
}
.lane {
  display: flex;
  flex-direction: column;
  align-items: center;
  flex-shrink: 0;
}
.lane.line {
  flex-direction: row;
  height: 22px;
}
.cell {
  display: flex;
  align-items: center;
  justify-content: center;
  flex-shrink: 0;
  height: 22px;
}
.lane.t2 {
  padding-top: 5px;
  gap: 5px;
}
.lane.t2 .cell {
  height: 30px;
}
.lane.t3 {
  padding-top: 1px;
  gap: 3px;
}
.lane.t3 .cell {
  height: 20px;
}
.lane.tm {
  padding-top: 1px;
}
.lane.tm .cell {
  height: 36px;
}
.lane.tm .cell.c-more {
  height: 16px;
  margin-top: 2px;
}
.lane.tm .cell.c-caret {
  height: 10px;
  margin-top: 4px;
}
.more {
  font-size: 12px;
  color: #222;
  white-space: nowrap;
}
.vsep {
  width: 1px;
  height: 20px;
  background: #dcdcdc;
}
.tol {
  display: flex;
  flex-direction: column;
  align-items: center;
  line-height: 7px;
  font-family: "Liberation Sans", sans-serif;
}
.tol b {
  font-weight: 400;
  font-size: 8.500px;
  color: #111;
}
.tol em {
  font-style: normal;
  font-size: 6.500px;
  color: #7c1515;
  max-width: 20px;
  text-align: center;
  line-height: 6px;
}
.fit {
  display: flex;
  flex-direction: column;
  align-items: center;
  font: 700 8px/8px "Liberation Sans", sans-serif;
  color: #1c2a9a;
  letter-spacing: -.2px;
}
.fit small {
  font-size: 6px;
  font-weight: 400;
  line-height: 7px;
  white-space: nowrap;
}
.g-label {
  height: 15px;
  display: flex;
  align-items: center;
  color: #1e7894;
  font-size: 12px;
}
.g-name {
  flex: 1;
  min-width: 0;
  text-align: center;
  white-space: nowrap;
}
.g-name.first {
  padding-left: 6px;
}
.g-caret {
  width: 24px;
  flex-shrink: 0;
  display: flex;
  justify-content: center;
}
.ribbon-end {
  margin-left: auto;
  width: 18px;
  margin-right: 1px;
  padding-top: 80px;
  display: flex;
  justify-content: center;
}

/* command bar */
.cmdbar {
  height: 28px;
  flex-shrink: 0;
  box-sizing: border-box;
  border-bottom: 1px solid #bdbdbd;
  display: flex;
  align-items: center;
  padding-left: 10px;
}
.cmd-menu {
  margin-left: 4px;
  width: 41px;
  white-space: nowrap;
  font-size: 11.500px;
}
.cbox {
  display: flex;
  align-items: center;
  justify-content: center;
  flex-shrink: 0;
  height: 26px;
}
.cbox.w14 {
  width: 14px;
}
.cbox.w33 {
  width: 33px;
}
.cbox.hl {
  width: 23px;
  height: 24px;
  margin-left: 8px;
  background: #c8e2ea;
}
.cbox.end {
  margin-left: auto;
  width: 18px;
  margin-right: 1px;
}
.csep {
  width: 1px;
  height: 20px;
  background: #ccc;
  margin-left: 4px;
}
.csep.last {
  margin-left: 7px;
}
.sel {
  box-sizing: border-box;
  height: 22px;
  border: 1px solid #777;
  display: flex;
  align-items: center;
  justify-content: space-between;
  padding: 0 6px 0 2px;
  font-size: 11.500px;
  flex-shrink: 0;
}
.sel.first {
  width: 149px;
  margin-left: 12px;
}
.sel.second {
  width: 155px;
}

/* main */
.main {
  flex: 1;
  min-height: 0;
  display: flex;
}
.rail {
  width: 32px;
  flex-shrink: 0;
  background: #dcdcdc;
  border-right: 1px solid #9e9e9e;
  display: flex;
  flex-direction: column;
}
.rail-item {
  height: 28px;
  display: flex;
  align-items: center;
  justify-content: center;
  flex-shrink: 0;
}
.rail-item.on {
  height: 46px;
  margin-left: 2px;
  margin-right: -1px;
  background: #fff;
  border: 1px solid #aaa;
  border-right: 0;
  box-sizing: border-box;
}
.nav {
  width: 248px;
  flex-shrink: 0;
  box-sizing: border-box;
  border-right: 1px solid #9e9e9e;
  padding: 0 10px 0 6px;
}
.nav-head {
  height: 29px;
  display: flex;
  align-items: center;
  justify-content: space-between;
  padding: 0 5px 0 3px;
  font-size: 11.500px;
}
.maxbox {
  width: 11px;
  height: 9px;
  border: 1px solid #222;
  border-top-width: 2px;
}
.tree {
  border: 1px solid #dcdcdc;
  padding: 1px 1px 0;
}
.tree-head {
  height: 21px;
  box-sizing: border-box;
  background: #f0f0f0;
  border-bottom: 1px solid #dcdcdc;
  display: flex;
  align-items: center;
  padding-left: 5px;
  font-size: 12px;
}
.rows {
  position: relative;
}
.conn {
  position: absolute;
  left: 0;
  top: 0;
  pointer-events: none;
}
.row {
  position: relative;
  height: 20px;
  box-sizing: border-box;
  border-bottom: 1px solid #ececec;
}
.row.alt {
  background: #f8f8f8;
}
.row-in {
  display: flex;
  align-items: center;
  height: 18px;
}
.row-text {
  margin-left: 3px;
  white-space: nowrap;
  font-family: "Inter", "Noto Sans CJK SC", sans-serif;
  font-size: 12px;
  color: #222;
}
.row-text.wide {
  margin-left: 5px;
}
.row-text.dim {
  color: #a8a8a8;
}
.row-text.bold {
  font-weight: 700;
}
.xbox-t {
  position: absolute;
  z-index: 1;
  left: 4px;
  top: 4px;
  width: 9px;
  height: 9px;
  box-sizing: border-box;
  border: 1px solid #bbb;
  background: #fff;
  font: 9px/7px "Liberation Sans", sans-serif;
  text-align: center;
}
.hscroll {
  margin-top: 10px;
  height: 16px;
  background: #eee;
  display: flex;
  align-items: center;
  padding-left: 17px;
}
.hscroll span {
  width: 109px;
  height: 2px;
  background: #888;
}
.splitter {
  margin-top: 1px;
  height: 5px;
  box-sizing: border-box;
  background: #dcdcdc;
  border: 1px solid #a8a8a8;
}
.sect {
  height: 24px;
  box-sizing: border-box;
  border-bottom: 2px solid #cfcfcf;
  display: flex;
  align-items: center;
  padding-left: 9px;
  color: #1b6a86;
  font-size: 14px;
}
.sect:first-of-type {
  margin-top: 1px;
}
.tri-r {
  width: 0;
  height: 0;
  border-top: 4px solid transparent;
  border-bottom: 4px solid transparent;
  border-left: 5px solid #1b6a86;
  margin-right: 9px;
}
.center {
  flex: 1;
  min-width: 0;
  display: flex;
  flex-direction: column;
}
.tabs {
  height: 27px;
  flex-shrink: 0;
  box-sizing: border-box;
  display: flex;
}
.tab {
  width: 96px;
  box-sizing: border-box;
  padding-left: 5px;
  display: flex;
  align-items: center;
  gap: 4px;
  font-size: 12px;
}
.tab.current {
  width: 123px;
  background: #07628a;
  color: #fff;
  gap: 5px;
  padding-left: 4px;
}
.tab.current b {
  margin-left: 5px;
  font: 700 12px "DejaVu Sans", sans-serif;
}
.view {
  flex: 1;
  min-height: 0;
  border-top: 2px solid #07628a;
  border-right: 1px solid #cfcfcf;
  overflow: hidden;
}
.model {
  margin-top: -1px;
}
.ax {
  font: 11px "Liberation Sans", sans-serif;
}
.ax.z {
  fill: #7d95e6;
}
.ax.y {
  fill: #5aa55a;
}
.ax.x {
  fill: #d05050;
}
.rbar {
  width: 34px;
  flex-shrink: 0;
  display: flex;
  flex-direction: column;
  align-items: center;
  padding-top: 10px;
  box-sizing: border-box;
}
.ritem {
  height: 32px;
  flex-shrink: 0;
  display: flex;
  align-items: center;
  justify-content: center;
}
.rsep {
  width: 24px;
  height: 1px;
  margin-top: 6px;
  background: #d8d8d8;
}
.rarrow {
  margin-top: auto;
  margin-bottom: 5px;
  margin-right: 18px;
  width: 0;
  height: 0;
  border-top: 3px solid transparent;
  border-bottom: 3px solid transparent;
  border-right: 3px solid #222;
}
.status {
  height: 24px;
  flex-shrink: 0;
  box-sizing: border-box;
  border-top: 1px solid #aaa;
  text-align: center;
  line-height: 23px;
  font-size: 11px;
  font-weight: 700;
  padding-left: 26px;
}
.watermark {
  position: absolute;
  right: 0;
  top: 780px;
  font: 13.500px/16px "Liberation Serif", "Noto Sans CJK SC", serif;
  letter-spacing: .5px;
  color: #5a5a5a;
  white-space: nowrap;
}
</style>

<style>
html,
body {
  margin: 0;
  background: #fff;
}
</style>
